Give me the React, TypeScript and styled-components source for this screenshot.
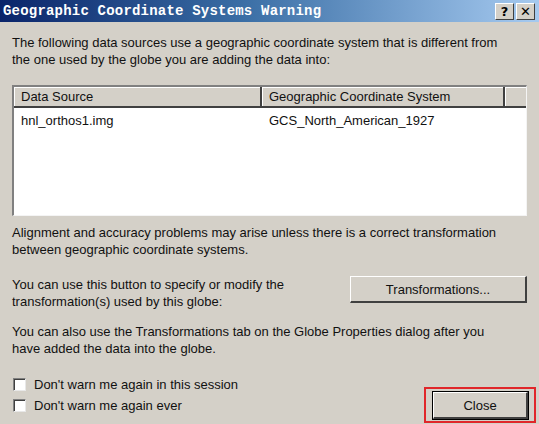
import React from "react";
import styled, { createGlobalStyle } from "styled-components";

const Global = createGlobalStyle`
  html, body { margin: 0; padding: 0; background: #d4d0c8; }
  body { width: 539px; height: 424px; overflow: hidden; }
`;

const Window = styled.div`
  width: 539px;
  height: 424px;
  background: #d4d0c8;
  display: flex;
  flex-direction: column;
  font-family: "Liberation Sans", "Noto Sans", sans-serif;
  font-size: 13px;
  color: #111;
  box-sizing: border-box;
`;

const TitleBar = styled.div`
  height: 22px;
  display: flex;
  align-items: center;
  justify-content: space-between;
  padding: 0 4px 0 3px;
  background: linear-gradient(to right, #0a246a 0%, #3a6ea5 45%, #a6caf0 100%);
`;

const Title = styled.div`
  font-family: "Liberation Mono", "DejaVu Sans Mono", monospace;
  font-weight: bold;
  font-size: 14px;
  letter-spacing: 0.2px;
  color: #fff;
`;

const TitleButtons = styled.div`
  display: flex;
  gap: 2px;
`;

const TitleButton = styled.div`
  width: 19px;
  height: 17px;
  background: #d4d0c8;
  box-sizing: border-box;
  border-top: 1px solid #fff;
  border-left: 1px solid #fff;
  border-right: 1px solid #404040;
  border-bottom: 1px solid #404040;
  display: flex;
  align-items: center;
  justify-content: center;
  font-family: "DejaVu Sans", sans-serif;
  font-weight: bold;
  font-size: 13px;
  color: #000;
`;

const Body = styled.div`
  flex: 1;
  display: flex;
  flex-direction: column;
  padding: 12px 12px 0 12px;
`;

const Para = styled.p<{ $mt?: number }>`
  margin: ${(p) => p.$mt ?? 0}px 0 0 0;
  line-height: 17px;
  white-space: nowrap;
`;

const ListBox = styled.div`
  margin-top: 17px;
  height: 131px;
  background: #fff;
  box-sizing: border-box;
  border-top: 2px solid #808080;
  border-left: 2px solid #808080;
  border-right: 1px solid #f4f4f4;
  border-bottom: 1px solid #f4f4f4;
  display: flex;
  flex-direction: column;
`;

const HeaderRow = styled.div`
  display: grid;
  grid-template-columns: 248px 243px 1fr;
  height: 19px;
  background: #d4d0c8;
  border-bottom: 2px solid #404040;
`;

const HeaderCell = styled.div<{ $last?: boolean }>`
  padding-left: 7px;
  line-height: 19px;
  border-right: ${(p) => (p.$last ? "none" : "2px solid #404040")};
  box-shadow: inset 1px 1px 0 #fff;
`;

const DataRow = styled.div`
  display: grid;
  grid-template-columns: 248px 243px 1fr;
  height: 19px;
  align-items: center;
  margin-top: 3px;
`;

const DataCell = styled.div`
  padding-left: 7px;
`;

const ButtonRow = styled.div`
  margin-top: 18px;
  display: flex;
  justify-content: space-between;
  align-items: flex-start;
`;

const Button = styled.div<{ $w: number; $default?: boolean }>`
  width: ${(p) => p.$w}px;
  height: 27px;
  box-sizing: border-box;
  background: #d4d0c8;
  display: flex;
  align-items: center;
  justify-content: center;
  border-top: 1px solid #fff;
  border-left: 1px solid #fff;
  border-right: 2px solid #404040;
  border-bottom: 2px solid #404040;
  outline: ${(p) => (p.$default ? "1px solid #000" : "none")};
`;

const Footer = styled.div`
  margin-top: 21px;
  display: flex;
  justify-content: space-between;
  align-items: flex-start;
`;

const Checks = styled.div`
  display: flex;
  flex-direction: column;
  gap: 8px;
`;

const CheckRow = styled.label`
  display: flex;
  align-items: center;
  gap: 8px;
  line-height: 13px;
`;

const Box = styled.span`
  width: 13px;
  height: 13px;
  box-sizing: border-box;
  background: #fff;
  border-top: 1px solid #808080;
  border-left: 1px solid #808080;
  border-right: 1px solid #e8e8e8;
  border-bottom: 1px solid #e8e8e8;
  box-shadow: inset 1px 1px 0 #404040;
  margin-left: 1px;
`;

const Highlight = styled.div`
  margin-top: 9px;
  border: 2px solid #e0262a;
  padding: 3px 6px 2px 7px;
  margin-right: -9px;
`;

export default function App() {
  return (
    <>
      <Global />
      <Window>
        <TitleBar>
          <Title>Geographic Coordinate Systems Warning</Title>
          <TitleButtons>
            <TitleButton>?</TitleButton>
            <TitleButton>✕</TitleButton>
          </TitleButtons>
        </TitleBar>
        <Body>
          <Para>
            The following data sources use a geographic coordinate system that is different from
            <br />
            the one used by the globe you are adding the data into:
          </Para>
          <ListBox>
            <HeaderRow>
              <HeaderCell>Data Source</HeaderCell>
              <HeaderCell>Geographic Coordinate System</HeaderCell>
              <HeaderCell $last />
            </HeaderRow>
            <DataRow>
              <DataCell>hnl_orthos1.img</DataCell>
              <DataCell>GCS_North_American_1927</DataCell>
            </DataRow>
          </ListBox>
          <Para $mt={8}>
            Alignment and accuracy problems may arise unless there is a correct transformation
            <br />
            between geographic coordinate systems.
          </Para>
          <ButtonRow>
            <Para>
              You can use this button to specify or modify the
              <br />
              transformation(s) used by this globe:
            </Para>
            <Button $w={177}>Transformations...</Button>
          </ButtonRow>
          <Para $mt={13}>
            You can also use the Transformations tab on the Globe Properties dialog after you
            <br />
            have added the data into the globe.
          </Para>
          <Footer>
            <Checks>
              <CheckRow>
                <Box />
                Don't warn me again in this session
              </CheckRow>
              <CheckRow>
                <Box />
                Don't warn me again ever
              </CheckRow>
            </Checks>
            <Highlight>
              <Button $w={95} $default>
                Close
              </Button>
            </Highlight>
          </Footer>
        </Body>
      </Window>
    </>
  );
}
